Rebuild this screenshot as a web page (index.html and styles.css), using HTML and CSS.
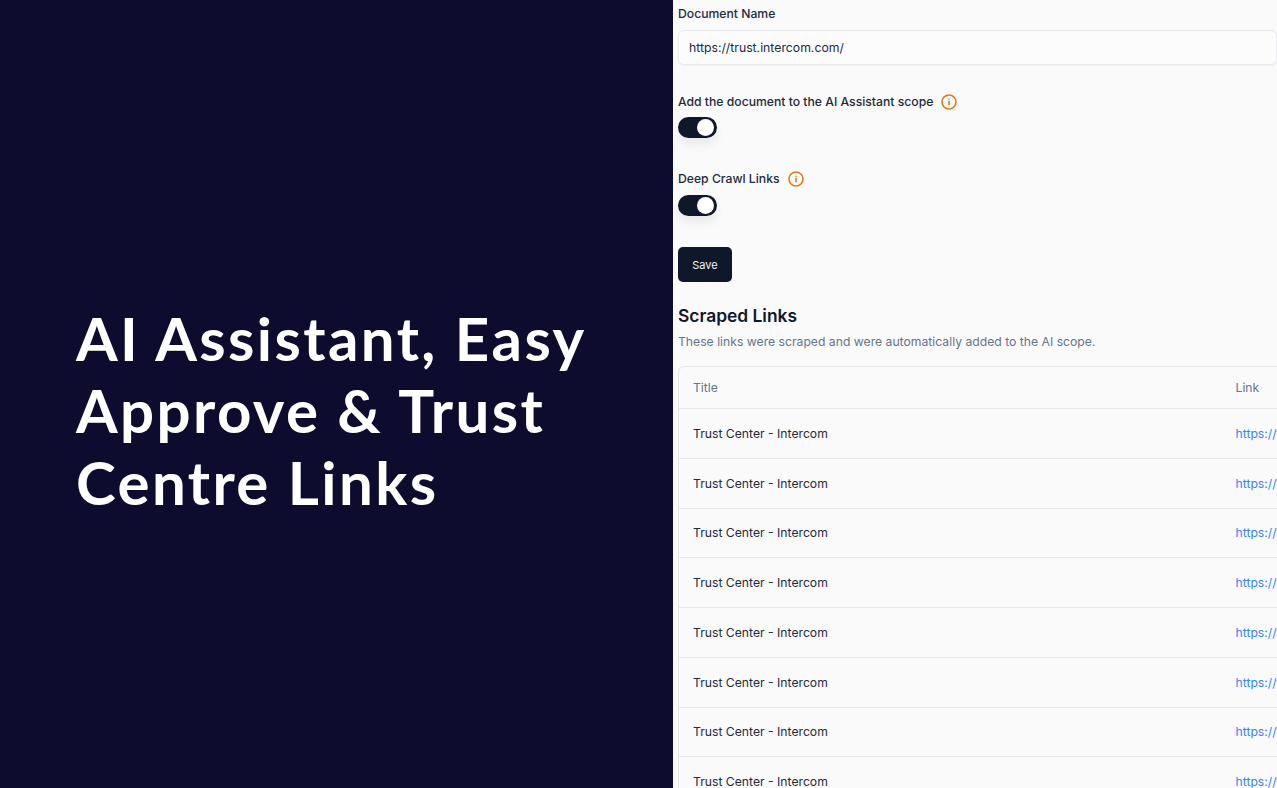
FILE: index.html
```html
<!DOCTYPE html>
<html lang="en">
<head>
<meta charset="utf-8">
<title>AI Assistant, Easy Approve &amp; Trust Centre Links</title>
<link rel="stylesheet" href="styles.css">
</head>
<body>
<div class="slide">
  <section class="hero">
    <h1 class="hero-title">AI Assistant, Easy Approve &amp; Trust Centre Links</h1>
  </section>
  <main class="panel">
    <label class="label label-first">Document Name</label>
    <div class="input">https://trust.intercom.com/</div>

    <div class="label-row label-row-a">
      <span class="label">Add the document to the AI Assistant scope</span>
      <svg class="info" viewBox="0 0 16 16"><circle cx="8" cy="8" r="7"/><path d="M8 7.4v3.4M8 5.2v.1"/></svg>
    </div>
    <div class="toggle"><span class="knob"></span></div>

    <div class="label-row label-row-b">
      <span class="label">Deep Crawl Links</span>
      <svg class="info" viewBox="0 0 16 16"><circle cx="8" cy="8" r="7"/><path d="M8 7.4v3.4M8 5.2v.1"/></svg>
    </div>
    <div class="toggle"><span class="knob"></span></div>

    <button class="save">Save</button>

    <h2 class="heading">Scraped Links</h2>
    <p class="sub">These links were scraped and were automatically added to the AI scope.</p>

    <div class="table">
      <div class="row row-head"><span class="c-title">Title</span><span class="c-link">Link</span></div>
      <div class="row"><span class="c-title">Trust Center - Intercom</span><a class="c-link link">https://trust.intercom.com/</a></div>
      <div class="row"><span class="c-title">Trust Center - Intercom</span><a class="c-link link">https://trust.intercom.com/</a></div>
      <div class="row"><span class="c-title">Trust Center - Intercom</span><a class="c-link link">https://trust.intercom.com/</a></div>
      <div class="row"><span class="c-title">Trust Center - Intercom</span><a class="c-link link">https://trust.intercom.com/</a></div>
      <div class="row"><span class="c-title">Trust Center - Intercom</span><a class="c-link link">https://trust.intercom.com/</a></div>
      <div class="row"><span class="c-title">Trust Center - Intercom</span><a class="c-link link">https://trust.intercom.com/</a></div>
      <div class="row"><span class="c-title">Trust Center - Intercom</span><a class="c-link link">https://trust.intercom.com/</a></div>
      <div class="row"><span class="c-title">Trust Center - Intercom</span><a class="c-link link">https://trust.intercom.com/</a></div>
    </div>
  </main>
</div>
</body>
</html>
```

FILE: styles.css
```css
* { box-sizing: border-box; }
html, body { margin: 0; height: 100%; overflow: hidden; }
body { font-family: Inter, "Liberation Sans", sans-serif; color: #0f172a; background: #fafafa; }
.slide { display: flex; width: 1277px; height: 788px; overflow: hidden; }
.hero { width: 673px; flex: none; background: #0d0c2e; display: flex; align-items: center; padding: 31px 76px 0; }
.hero-title { margin: 0; font-family: Lato, sans-serif; font-weight: 700; font-size: 60px; line-height: 72px; letter-spacing: 2.4px; color: #fff; }
.panel { flex: 1; min-width: 0; padding: 0 0 0 5px; background: #fafafa; overflow: hidden; }
.label { font-size: 12.2px; line-height: 16px; font-weight: 500; color: #1e293b; }
.label-first { display: block; margin-top: 6px; }
.input { margin-top: 8px; height: 35px; border: 1px solid #e8eaee; border-radius: 6px; background: #fcfcfc; padding: 0 10px; font-size: 12.25px; line-height: 33px; color: #1e293b; box-shadow: 0 1px 2px rgba(0,0,0,.04); }
.label-row { display: flex; align-items: center; gap: 8px; height: 16px; }
.label-row-a { margin-top: 28.5px; }
.label-row-b { margin-top: 33px; }
.info { width: 16px; height: 16px; fill: none; stroke: #e27a1c; stroke-width: 1.6; stroke-linecap: round; }
.toggle { margin-top: 7.5px; width: 38.5px; height: 21px; border-radius: 11px; background: #0f172a; position: relative; box-shadow: 0 6px 10px rgba(15,23,42,.08); }
.knob { position: absolute; right: 2.5px; top: 2px; width: 17px; height: 17px; border-radius: 50%; background: #fff; }
.save { display: block; margin-top: 31px; width: 54px; height: 35px; padding: 1px 0 0; border: 0; border-radius: 5px; background: #0f172a; color: #f1f5f9; font-family: inherit; font-size: 11px; font-weight: 400; }
.heading { margin: 23px 0 0; font-size: 17.4px; line-height: 22px; font-weight: 600; color: #0f172a; }
.sub { margin: 7px 0 0; font-size: 12.2px; line-height: 16px; color: #64748b; }
.table { margin-top: 16px; border: 1px solid #e5e7eb; border-right: 0; border-radius: 6px 0 0 0; }
.row { display: flex; align-items: center; height: 49.75px; border-top: 1px solid #e5e7eb; font-size: 12.2px; padding-left: 14px; white-space: nowrap; color: #1e293b; }
.row-head { height: 41.5px; border-top: 0; color: #64748b; font-weight: 400; }
.c-title { width: 542.5px; flex: none; }
.link { color: #3b82f6; }
```
